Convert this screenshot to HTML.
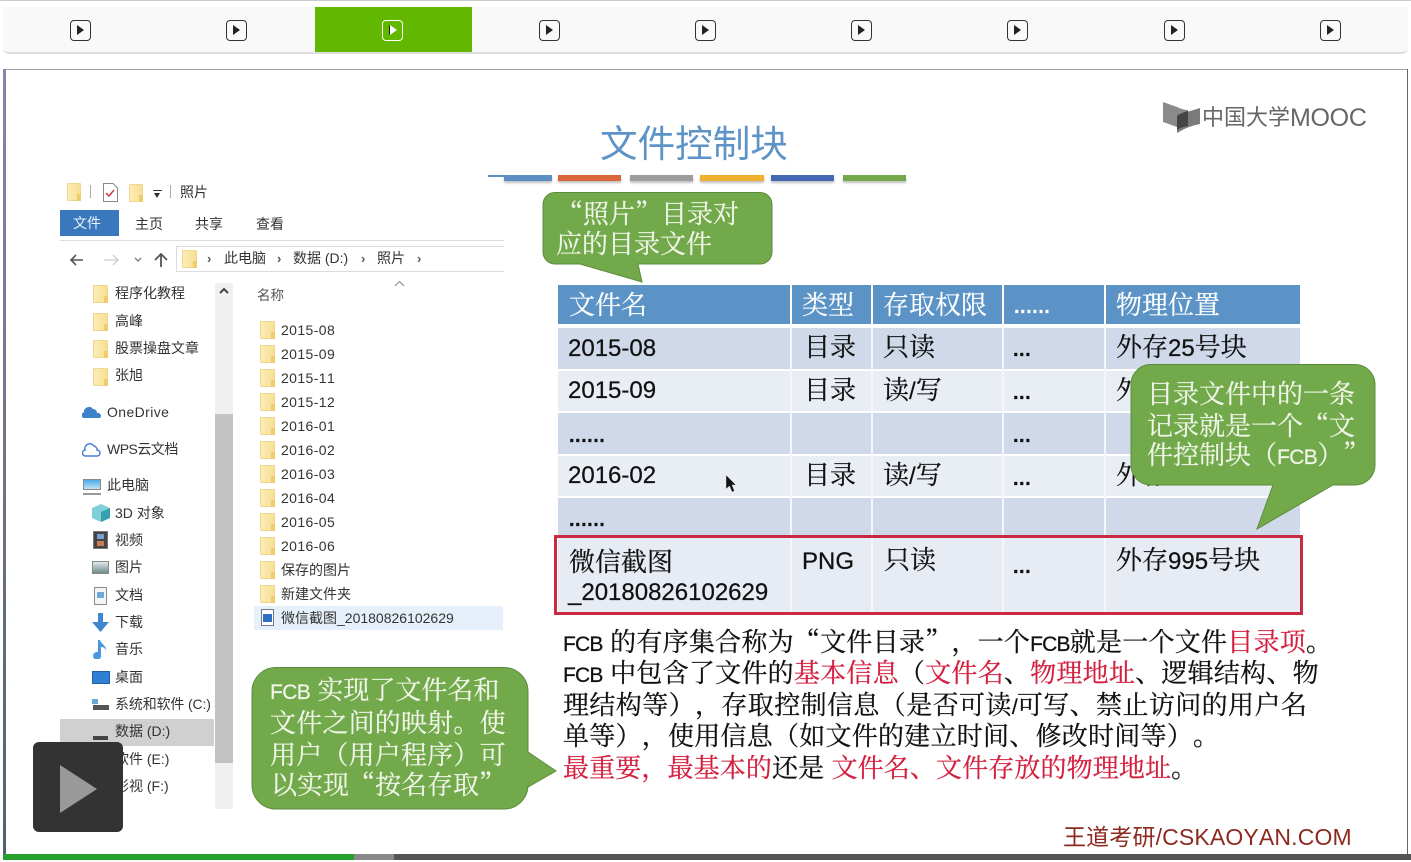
<!DOCTYPE html>
<html lang="zh-Hans"><head><meta charset="utf-8"><title>文件控制块</title>
<style>
html,body{margin:0;padding:0;background:#fff}
body{position:relative;width:1411px;height:862px;overflow:hidden;font-family:"Liberation Sans","Noto Sans CJK SC",sans-serif;text-spacing-trim:space-all;font-kerning:none}
div,span.a,svg.a{position:absolute}
.t{white-space:nowrap;line-height:30px;height:30px}
.b{font-family:"Liberation Sans","Noto Serif CJK SC",serif;font-size:26px;color:#111;white-space:nowrap;line-height:32px;height:32px;-webkit-text-stroke:.25px #111}
.b i{font-style:normal;font-family:"Liberation Sans",sans-serif;font-size:21px;letter-spacing:-.8px}
.b em{font-style:normal;color:#d4203f;-webkit-text-stroke:.25px #d4203f}
.q{font-family:"Noto Serif CJK SC",serif}
.c{font-family:"Liberation Sans","Noto Serif CJK SC",serif;font-size:26px;white-space:nowrap;line-height:32px;height:32px;color:#111;-webkit-text-stroke:.25px #111}
.h{color:#fff;-webkit-text-stroke:.2px #fff}
.n{font-family:"Liberation Sans",sans-serif;font-size:24px}
.d{font-family:"Liberation Sans",sans-serif;font-size:20px;font-weight:bold;letter-spacing:.5px}
.w{font-family:"Liberation Sans","Noto Serif CJK SC",serif;font-size:26px;color:#f1f6ea;white-space:nowrap;line-height:32px;height:32px;-webkit-text-stroke:.2px #f1f6ea}
.w i{font-style:normal;font-size:21px;font-family:"Liberation Sans",sans-serif;letter-spacing:-.6px}
.e{font-size:14px;color:#333;white-space:nowrap;line-height:20px;height:20px}
.g{letter-spacing:.4px}
.f{width:15px;height:18px;background:linear-gradient(90deg,#fcecb6,#f8df92);border:1px solid #efd78d;box-sizing:border-box;border-radius:1px}
.f:after{content:"";position:absolute;right:-1px;bottom:-1px;width:4px;height:7px;background:#f0cc6c}
.tab{width:21px;height:21px;top:20px;border:1.6px solid #333;border-radius:4px;box-sizing:border-box}
.tab:after{content:"";position:absolute;left:6px;top:4px;border-left:7px solid #222;border-top:5px solid transparent;border-bottom:5px solid transparent}
.bar{top:175px;height:6px;box-shadow:0 2px 2px rgba(0,0,0,.25)}
.s{font-size:13px;font-weight:bold;color:#555}
</style></head><body>
<div style="left:0;top:0;width:1411px;height:1px;background:#ccc"></div>
<div style="left:3px;top:7px;width:1405px;height:45px;background:#f9f9f9;border-bottom:2px solid #ddd;border-radius:0 0 6px 6px"></div>
<div style="left:315px;top:7px;width:157px;height:45px;background:#62b800"></div>
<div class="tab" style="left:70px"></div><div class="tab" style="left:226px"></div>
<div class="tab" style="left:382px;border-color:#fff"></div>
<div style="left:390px;top:25px;border-left:7px solid #fff;border-top:5px solid transparent;border-bottom:5px solid transparent"></div>
<div class="tab" style="left:539px"></div><div class="tab" style="left:695px"></div><div class="tab" style="left:851px"></div><div class="tab" style="left:1007px"></div><div class="tab" style="left:1164px"></div><div class="tab" style="left:1320px"></div>

<div style="left:3px;top:69px;width:1405px;height:1px;background:#a3a3a8"></div>
<div style="left:3px;top:69px;width:3px;height:786px;background:linear-gradient(#8686a8,#55606e)"></div>
<div style="left:1407px;top:69px;width:1px;height:786px;background:#666"></div>

<!-- logo -->
<svg class="a" style="left:1163px;top:100px" width="40" height="36" viewBox="0 0 40 36"><path d="M0 2L14 7Q20 10 25 10V26Q18 28 14 27L0 22Z" fill="#8a8a8a"/><path d="M14 33V14Q25 12 37 8V24Q25 26 14 33Z" fill="#7a7a7a"/><path d="M14 16Q20 12 25 11V26Q18 27 14 30Z" fill="#444"/></svg>
<div class="t" style="left:1202px;top:103px;font-size:22px;color:#666">中国大学</div>
<div class="t" style="left:1290px;top:103px;font-size:25px;color:#666;letter-spacing:-.3px">MOOC</div>

<div class="t" style="left:600px;top:124px;height:40px;line-height:40px;font-size:37.6px;color:#5d93c6">文件控制块</div>
<div style="left:488px;top:175px;width:16px;height:2px;background:#5b8fc4"></div>
<div class="bar" style="left:504px;width:48px;background:#5b8fc4"></div>
<div class="bar" style="left:558px;width:63px;background:#d9663a"></div>
<div class="bar" style="left:630px;width:63px;background:#9c9c9c"></div>
<div class="bar" style="left:700px;width:64px;background:#efb030"></div>
<div class="bar" style="left:771px;width:63px;background:#4468b4"></div>
<div class="bar" style="left:843px;width:63px;background:#74a84a"></div>

<!-- explorer -->
<div class="f" style="left:67px;top:183px;width:14px"></div>
<div style="left:90px;top:185px;width:1px;height:13px;background:#aaa"></div>
<svg class="a" style="left:103px;top:183px" width="15" height="19" viewBox="0 0 15 19"><path d="M.5.5H10L14.500 5V18.500H.5Z" fill="#fff" stroke="#888"/><path d="M3 10l3 3 5-6" fill="none" stroke="#d23b3b" stroke-width="1.500"/></svg>
<div class="f" style="left:129px;top:184px;width:14px"></div>
<div style="left:153px;top:190px;width:9px;height:1px;background:#333"></div>
<div style="left:154px;top:193px;border-top:5px solid #333;border-left:3.500px solid transparent;border-right:3.500px solid transparent"></div>
<div style="left:170px;top:185px;width:1px;height:13px;background:#aaa"></div>
<div class="e" style="left:180px;top:182px">照片</div>
<div style="left:60px;top:210px;width:59px;height:26px;background:#3a78bd"></div>
<div class="e" style="left:73px;top:213px;color:#e8f1fb">文件</div>
<div class="e" style="left:135px;top:214px">主页</div>
<div class="e" style="left:195px;top:214px">共享</div>
<div class="e" style="left:256px;top:214px">查看</div>
<div style="left:60px;top:240px;width:444px;height:1px;background:#ddd"></div>
<svg class="a" style="left:68px;top:250px" width="105" height="20" viewBox="0 0 105 20" fill="none"><path d="M15 10H3M8 5L3 10L8 15" stroke="#555" stroke-width="1.600"/><path d="M50 10H36M45 5L50 10L45 15" stroke="#ccc" stroke-width="1.300"/><path d="M67 8l3 3 3-3" stroke="#777" stroke-width="1.300"/><path d="M93 17V4M87 10L93 4L99 10" stroke="#555" stroke-width="1.800"/></svg>
<div style="left:176px;top:246px;width:328px;height:26px;border:1px solid #dcdcdc;border-right:0;box-sizing:border-box"></div>
<div class="f" style="left:182px;top:250px"></div>
<div class="e s" style="left:207px;top:249px">›</div>
<div class="e" style="left:224px;top:248px">此电脑</div>
<div class="e s" style="left:277px;top:249px">›</div>
<div class="e" style="left:293px;top:248px">数据 (D:)</div>
<div class="e s" style="left:361px;top:249px">›</div>
<div class="e" style="left:377px;top:248px">照片</div>
<div class="e s" style="left:417px;top:249px">›</div>

<!-- nav -->
<div class="f" style="left:93px;top:285px"></div><div class="e" style="left:115px;top:283px">程序化教程</div>
<div class="f" style="left:93px;top:313px"></div><div class="e" style="left:115px;top:311px">高峰</div>
<div class="f" style="left:93px;top:340px"></div><div class="e" style="left:115px;top:338px">股票操盘文章</div>
<div class="f" style="left:93px;top:368px"></div><div class="e" style="left:115px;top:365px">张旭</div>
<svg class="a" style="left:82px;top:405px" width="19" height="14" viewBox="0 0 19 14"><path d="M1 13a3.500 3.500 0 0 1 1-6 5 5 0 0 1 9-3 4 4 0 0 1 4 4 3 3 0 0 1 3 5Z" fill="#3d83cc"/></svg>
<div class="e g" style="left:107px;top:402px">OneDrive</div>
<svg class="a" style="left:82px;top:442px" width="19" height="15" viewBox="0 0 19 15"><path d="M4 14a3 3 0 0 1-1-6 5 5 0 0 1 9-4 4 4 0 0 1 3 4 3 3 0 0 1 0 6Z" fill="none" stroke="#4d7fd6" stroke-width="1.500"/></svg>
<div class="e" style="left:107px;top:439px;letter-spacing:-.5px">WPS云文档</div>
<div style="left:83px;top:479px;width:18px;height:11px;background:linear-gradient(#4fa9e4,#bfe3f6);border:1px solid #888;box-sizing:border-box"></div>
<div style="left:83px;top:493px;width:18px;height:2px;background:#999"></div>
<div class="e" style="left:107px;top:475px">此电脑</div>
<svg class="a" style="left:92px;top:504px" width="18" height="18" viewBox="0 0 18 18"><path d="M9 0L18 4V14L9 18L0 14V4Z" fill="#7fd0d8"/><path d="M9 8L18 4V14L9 18Z" fill="#35a0ae"/></svg>
<div class="e" style="left:115px;top:503px">3D 对象</div>
<div style="left:93px;top:531px;width:15px;height:18px;background:#444;border:1px solid #777;box-sizing:border-box"></div>
<div style="left:97px;top:534px;width:7px;height:5px;background:#7a9fd0"></div><div style="left:97px;top:541px;width:7px;height:5px;background:#c97a50"></div>
<div class="e" style="left:115px;top:530px">视频</div>
<div style="left:92px;top:561px;width:17px;height:13px;background:linear-gradient(#dfe8f0,#6f8e8a);border:1px solid #888;box-sizing:border-box"></div>
<div class="e" style="left:115px;top:557px">图片</div>
<div style="left:94px;top:587px;width:13px;height:18px;background:#f3f6f8;border:1px solid #888;box-sizing:border-box"></div>
<div style="left:97px;top:592px;width:7px;height:6px;background:#6fa8d8"></div>
<div class="e" style="left:115px;top:585px">文档</div>
<svg class="a" style="left:92px;top:613px" width="17" height="19" viewBox="0 0 17 19"><path d="M6 0H11V9H17L8.500 19L0 9H6Z" fill="#3f86cf"/></svg>
<div class="e" style="left:115px;top:612px">下载</div>
<svg class="a" style="left:93px;top:640px" width="15" height="19" viewBox="0 0 15 19"><path d="M5 0H7C8 4 13 5 13 10 11 7 9 7 8 7V15A4 4 0 1 1 5 12Z" fill="#4a97dc"/></svg>
<div class="e" style="left:115px;top:639px">音乐</div>
<div style="left:92px;top:671px;width:18px;height:13px;background:#2f7fd4;border:1px solid #1f5fa8;box-sizing:border-box"></div>
<div class="e" style="left:115px;top:667px">桌面</div>
<div style="left:93px;top:705px;width:16px;height:5px;background:#555"></div><div style="left:92px;top:699px;width:6px;height:5px;background:#6aa8d8"></div>
<div class="e" style="left:115px;top:694px;letter-spacing:-.15px">系统和软件 (C:)</div>
<div style="left:60px;top:719px;width:154px;height:27px;background:#d0d0d0"></div>
<div style="left:93px;top:736px;width:15px;height:4px;background:#444"></div>
<div class="e" style="left:115px;top:721px">数据 (D:)</div>
<div style="left:93px;top:763px;width:15px;height:4px;background:#333"></div>
<div class="e" style="left:115px;top:749px">软件 (E:)</div>
<div style="left:93px;top:791px;width:15px;height:4px;background:#333"></div>
<div class="e" style="left:115px;top:776px">影视 (F:)</div>
<div style="left:215px;top:283px;width:18px;height:526px;background:#f0f0f0"></div>
<div style="left:215px;top:414px;width:18px;height:349px;background:#c3c3c3"></div>
<svg class="a" style="left:218px;top:286px" width="12" height="9" viewBox="0 0 12 9"><path d="M2 7L6 3L10 7" fill="none" stroke="#444" stroke-width="2"/></svg>
<div class="e" style="left:257px;top:286px;font-size:13.500px;color:#555">名称</div>
<svg class="a" style="left:394px;top:280px" width="11" height="7" viewBox="0 0 11 7"><path d="M1 6L5.500 1.500L10 6" fill="none" stroke="#888"/></svg>

<!-- files -->
<div class="f" style="left:260px;top:321px"></div><div class="e g" style="left:281px;top:320px">2015-08</div>
<div class="f" style="left:260px;top:345px"></div><div class="e g" style="left:281px;top:344px">2015-09</div>
<div class="f" style="left:260px;top:369px"></div><div class="e g" style="left:281px;top:368px">2015-11</div>
<div class="f" style="left:260px;top:393px"></div><div class="e g" style="left:281px;top:392px">2015-12</div>
<div class="f" style="left:260px;top:417px"></div><div class="e g" style="left:281px;top:416px">2016-01</div>
<div class="f" style="left:260px;top:441px"></div><div class="e g" style="left:281px;top:440px">2016-02</div>
<div class="f" style="left:260px;top:465px"></div><div class="e g" style="left:281px;top:464px">2016-03</div>
<div class="f" style="left:260px;top:489px"></div><div class="e g" style="left:281px;top:488px">2016-04</div>
<div class="f" style="left:260px;top:513px"></div><div class="e g" style="left:281px;top:512px">2016-05</div>
<div class="f" style="left:260px;top:537px"></div><div class="e g" style="left:281px;top:536px">2016-06</div>
<div class="f" style="left:260px;top:561px"></div><div class="e" style="left:281px;top:560px">保存的图片</div>
<div class="f" style="left:260px;top:585px"></div><div class="e" style="left:281px;top:584px">新建文件夹</div>
<div style="left:254px;top:606px;width:249px;height:24px;background:#e5f0fa"></div>
<div style="left:261px;top:609px;width:13px;height:17px;background:#fff;border:1px solid #778;box-sizing:border-box"></div>
<div style="left:263px;top:614px;width:9px;height:8px;background:#2f6fc0"></div>
<div class="e" style="left:281px;top:608px">微信截图_20180826102629</div>

<!-- table -->
<div style="left:558px;top:285px;width:232px;height:39px;background:#5b93c6"></div>
<div style="left:792px;top:285px;width:79px;height:39px;background:#5b93c6"></div>
<div style="left:873px;top:285px;width:129px;height:39px;background:#5b93c6"></div>
<div style="left:1004px;top:285px;width:100px;height:39px;background:#5b93c6"></div>
<div style="left:1106px;top:285px;width:194px;height:39px;background:#5b93c6"></div>
<div style="left:558px;top:328px;width:742px;height:41px;background:#cfd9e9"></div>
<div style="left:558px;top:371px;width:742px;height:40px;background:#e9edf4"></div>
<div style="left:558px;top:413px;width:742px;height:41px;background:#cfd9e9"></div>
<div style="left:558px;top:456px;width:742px;height:40px;background:#e9edf4"></div>
<div style="left:558px;top:498px;width:742px;height:40px;background:#cfd9e9"></div>
<div style="left:558px;top:538px;width:742px;height:74px;background:#e7ebf3"></div>
<div style="left:790px;top:328px;width:2px;height:284px;background:#f4f6fa"></div>
<div style="left:871px;top:328px;width:2px;height:284px;background:#f4f6fa"></div>
<div style="left:1002px;top:328px;width:2px;height:284px;background:#f4f6fa"></div>
<div style="left:1104px;top:328px;width:2px;height:284px;background:#f4f6fa"></div>

<div class="c h" style="left:569px;top:289px">文件名</div>
<div class="c h" style="left:802px;top:289px">类型</div>
<div class="c h" style="left:883px;top:289px">存取权限</div>
<div class="c h d" style="left:1014px;top:291px">......</div>
<div class="c h" style="left:1116px;top:289px">物理位置</div>

<div class="c n" style="left:568px;top:333px">2015-08</div>
<div class="c" style="left:804px;top:331px">目录</div><div class="c" style="left:883px;top:331px">只读</div><div class="c d" style="left:1013px;top:334px">...</div><div class="c" style="left:1116px;top:331px">外存<span class="n">25</span>号块</div>
<div class="c n" style="left:568px;top:375px">2015-09</div>
<div class="c" style="left:804px;top:374px">目录</div><div class="c" style="left:883px;top:374px">读<span class="n">/</span>写</div><div class="c d" style="left:1013px;top:377px">...</div><div class="c" style="left:1116px;top:374px">外存</div>
<div class="c d" style="left:569px;top:420px">......</div><div class="c d" style="left:1013px;top:420px">...</div>
<div class="c n" style="left:568px;top:460px">2016-02</div>
<div class="c" style="left:804px;top:459px">目录</div><div class="c" style="left:883px;top:459px">读<span class="n">/</span>写</div><div class="c d" style="left:1013px;top:463px">...</div><div class="c" style="left:1116px;top:459px">外存</div>
<div class="c d" style="left:569px;top:504px">......</div>
<div class="c" style="left:569px;top:546px">微信截图</div>
<div class="c n" style="left:568px;top:577px">_20180826102629</div>
<div class="c n" style="left:802px;top:546px">PNG</div>
<div class="c" style="left:884px;top:544px">只读</div>
<div class="c d" style="left:1013px;top:551px">...</div>
<div class="c" style="left:1116px;top:544px">外存<span class="n">995</span>号块</div>

<div style="left:554px;top:535px;width:749px;height:80px;border:3px solid #c92a42;box-sizing:border-box"></div>

<svg class="a" style="left:725px;top:474px" width="12" height="20" viewBox="0 0 12 20"><path d="M1 1V15L4.500 12L7 18L9.500 17L7 11H11Z" fill="#111" stroke="#ddd" stroke-width=".5"/></svg>

<!-- callouts -->
<svg class="a" style="left:0;top:0;pointer-events:none" width="1411" height="862" viewBox="0 0 1411 862">
<path d="M555 192.500H760a12 12 0 0 1 12 12V252a12 12 0 0 1-12 12H638L642 282L580 264H555a12 12 0 0 1-12-12V204.500a12 12 0 0 1 12-12Z" fill="#72a94a" stroke="#5c8c3b"/>
<path d="M1151 364.500H1355a20 20 0 0 1 20 20V465a20 20 0 0 1-20 20H1333L1257 529L1273 485H1151a20 20 0 0 1-20-20V384.500a20 20 0 0 1 20-20Z" fill="#72a94a" stroke="#5c8c3b"/>
<path d="M276 667.500H504a24 24 0 0 1 24 24V752L556 771L528 787V785a24 24 0 0 1-24 24H276a24 24 0 0 1-24-24V691.500a24 24 0 0 1 24-24Z" fill="#72a94a" stroke="#5c8c3b"/>
</svg>
<div class="w" style="left:557px;top:197px"><span class="q">“</span>照片<span class="q">”</span>目录对</div>
<div class="w" style="left:556px;top:228px">应的目录文件</div>
<div class="w" style="left:1147px;top:378px">目录文件中的一条</div>
<div class="w" style="left:1147px;top:409px">记录就是一个<span class="q">“</span>文</div>
<div class="w" style="left:1147px;top:438px">件控制块（<i>FCB</i>）<span class="q">”</span></div>
<div class="w" style="left:270px;top:674px"><i>FCB</i> 实现了文件名和</div>
<div class="w" style="left:270px;top:707px;letter-spacing:.2px">文件之间的映射。使</div>
<div class="w" style="left:270px;top:739px;letter-spacing:.2px">用户（用户程序）可</div>
<div class="w" style="left:271px;top:768px">以实现<span class="q">“</span>按名存取<span class="q">”</span></div>

<!-- body text -->
<div class="b" style="left:563px;top:625px;letter-spacing:.25px"><i>FCB</i> 的有序集合称为<span class="q">“</span>文件目录<span class="q">”</span>，一个<i>FCB</i>就是一个文件<em>目录项</em>。</div>
<div class="b" style="left:563px;top:657px;letter-spacing:.25px"><i>FCB</i> 中包含了文件的<em>基本信息</em>（<em>文件名</em>、<em>物理地址</em>、逻辑结构、物</div>
<div class="b" style="left:563px;top:689px;letter-spacing:.4px">理结构等），存取控制信息（是否可读<i>/</i>可写、禁止访问的用户名</div>
<div class="b" style="left:563px;top:720px;letter-spacing:.25px">单等），使用信息（如文件的建立时间、修改时间等）。</div>
<div class="b" style="left:563px;top:752px;letter-spacing:.12px"><em>最重要，最基本的</em>还是 <em>文件名、文件存放的物理地址</em>。</div>

<div class="t" style="left:1063px;top:822px;font-size:23px;color:#8c2a20;letter-spacing:.15px">王道考研/CSKAOYAN.COM</div>

<!-- play overlay -->
<div style="left:33px;top:742px;width:90px;height:90px;background:#333;border-radius:6px"></div>
<div style="left:60px;top:765px;border-left:37px solid #999;border-top:24px solid transparent;border-bottom:24px solid transparent"></div>

<!-- progress -->
<div style="left:3px;top:854px;width:1408px;height:6px;background:#555"></div>
<div style="left:3px;top:854px;width:351px;height:6px;background:#26a12d"></div>
<div style="left:354px;top:854px;width:40px;height:6px;background:#8a8a8a"></div>
</body></html>
